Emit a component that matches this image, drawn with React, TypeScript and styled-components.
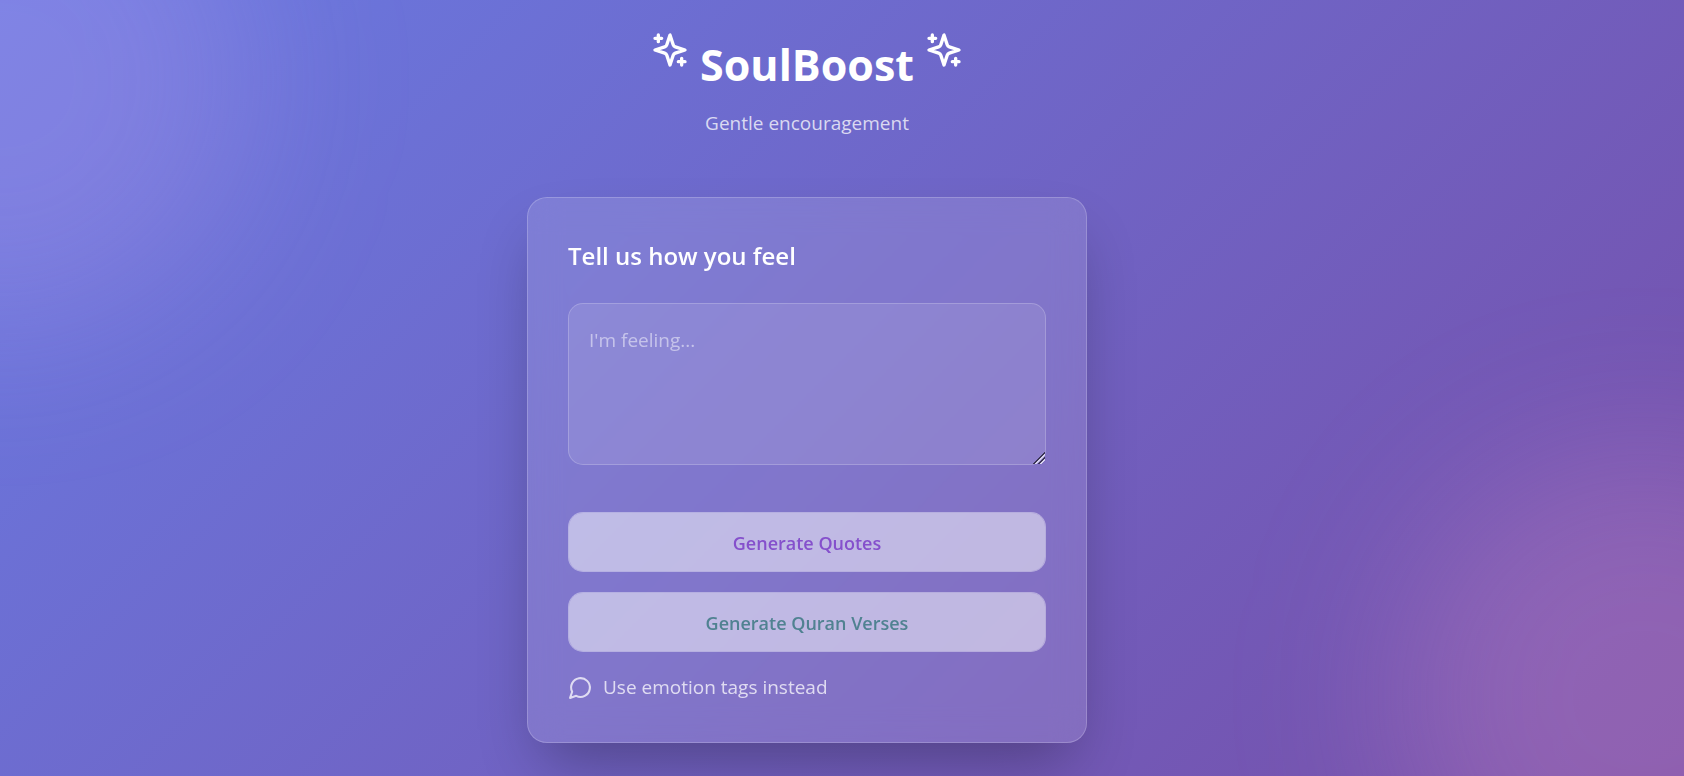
import React, { useState } from "react";
import styled, { createGlobalStyle } from "styled-components";

const GlobalStyle = createGlobalStyle`
  *, *::before, *::after { box-sizing: border-box; }
  body {
    margin: 0;
    font-family: "Segoe UI", "Open Sans", "Noto Sans", sans-serif;
    font-size: 19px;
    line-height: 30px;
    color: #fff;
  }
`;

const Page = styled.div`
  position: relative;
  isolation: isolate;
  overflow: hidden;
  min-height: 100vh;
  display: flex;
  flex-direction: column;
  align-items: center;
  padding: 30px 90px 30px 20px;
  background: linear-gradient(135deg, #697ae2 0%, #764ea8 100%);
`;

const Glow = styled.div<{ $corner: "start" | "end" }>`
  position: absolute;
  z-index: -1;
  width: 500px;
  height: 500px;
  border-radius: 50%;
  filter: blur(80px);
  ${({ $corner }) =>
    $corner === "start"
      ? "top: -170px; left: -250px; background: rgba(232, 176, 244, 0.18);"
      : "bottom: -170px; right: -210px; background: rgba(249, 168, 212, 0.2);"}
`;

const Header = styled.header`
  display: flex;
  flex-direction: column;
  align-items: center;
  margin-bottom: 59px;
  text-align: center;
`;

const Brand = styled.div`
  display: flex;
  align-items: flex-start;
  gap: 10px;
  margin-bottom: 18px;
`;

const LineIcon = styled.svg<{ $size: number }>`
  flex: none;
  width: ${({ $size }) => $size}px;
  height: ${({ $size }) => $size}px;
  fill: none;
  stroke: currentColor;
  stroke-width: 2;
  stroke-linecap: round;
  stroke-linejoin: round;
`;

const Title = styled.h1`
  margin: 10px 0 0;
  font-size: 43px;
  line-height: 50px;
  font-weight: 700;
`;

const Tagline = styled.p`
  margin: 0;
  color: rgba(255, 255, 255, 0.75);
`;

const Card = styled.form`
  display: flex;
  flex-direction: column;
  width: 100%;
  max-width: 560px;
  padding: 40px;
  border: 1px solid rgba(255, 255, 255, 0.2);
  border-radius: 20px;
  background: rgba(255, 255, 255, 0.12);
  backdrop-filter: blur(16px);
  box-shadow: 0 31px 62px -15px rgba(0, 0, 0, 0.3);
`;

const Prompt = styled.label`
  margin-bottom: 30px;
  font-size: 24px;
  line-height: 35px;
  font-weight: 600;
`;

const FeelingInput = styled.textarea`
  display: block;
  width: 100%;
  height: 162px;
  margin: 0 0 47px;
  padding: 21px 20px;
  border: 1px solid rgba(255, 255, 255, 0.2);
  border-radius: 15px;
  background: rgba(255, 255, 255, 0.1);
  color: #fff;
  font: inherit;
  resize: vertical;
  outline: none;
  &::placeholder { color: rgba(255, 255, 255, 0.5); }
  &::-webkit-resizer {
    background: linear-gradient(
      135deg,
      transparent 58%,
      #3b3556 58% 65%,
      #d8d3ee 65% 72%,
      transparent 72% 76%,
      #3b3556 76% 82%,
      #d8d3ee 82% 88%,
      transparent 88%
    );
  }
`;

const Actions = styled.div`
  display: flex;
  flex-direction: column;
  gap: 20px;
`;

const ActionButton = styled.button<{ $ink: string }>`
  height: 60px;
  padding: 2px 20px 0;
  border: 1px solid rgba(255, 255, 255, 0.42);
  border-radius: 15px;
  background: rgba(255, 255, 255, 0.5);
  background-clip: padding-box;
  color: ${({ $ink }) => $ink};
  font: inherit;
  font-size: 18px;
  font-weight: 600;
  cursor: pointer;
`;

const ModeToggle = styled.button`
  display: flex;
  align-items: center;
  gap: 10px;
  padding: 0;
  border: 0;
  background: none;
  color: rgba(255, 255, 255, 0.75);
  font: inherit;
  cursor: pointer;
`;

function SparklesIcon() {
  return (
    <LineIcon $size={40} viewBox="0 0 24 24" aria-hidden>
      <path d="m12 3-1.912 5.813a2 2 0 0 1-1.275 1.275L3 12l5.813 1.912a2 2 0 0 1 1.275 1.275L12 21l1.912-5.813a2 2 0 0 1 1.275-1.275L21 12l-5.813-1.912a2 2 0 0 1-1.275-1.275L12 3Z" />
      <path d="M5 3v4M19 17v4M3 5h4M17 19h4" />
    </LineIcon>
  );
}

function ChatIcon() {
  return (
    <LineIcon $size={25} viewBox="0 0 24 24" aria-hidden>
      <path d="M7.9 20A9 9 0 1 0 4 16.1L2 22Z" />
    </LineIcon>
  );
}

export default function App() {
  const [feeling, setFeeling] = useState("");

  return (
    <Page>
      <GlobalStyle />
      <Glow $corner="start" />
      <Glow $corner="end" />
      <Header>
        <Brand>
          <SparklesIcon />
          <Title>SoulBoost</Title>
          <SparklesIcon />
        </Brand>
        <Tagline>Gentle encouragement</Tagline>
      </Header>
      <Card onSubmit={(event) => event.preventDefault()}>
        <Prompt htmlFor="feeling">Tell us how you feel</Prompt>
        <FeelingInput
          id="feeling"
          placeholder="I'm feeling..."
          value={feeling}
          onChange={(event) => setFeeling(event.target.value)}
        />
        <Actions>
          <ActionButton type="button" $ink="#8550cc">Generate Quotes</ActionButton>
          <ActionButton type="button" $ink="#508291">Generate Quran Verses</ActionButton>
          <ModeToggle type="button">
            <ChatIcon />
            Use emotion tags instead
          </ModeToggle>
        </Actions>
      </Card>
    </Page>
  );
}
